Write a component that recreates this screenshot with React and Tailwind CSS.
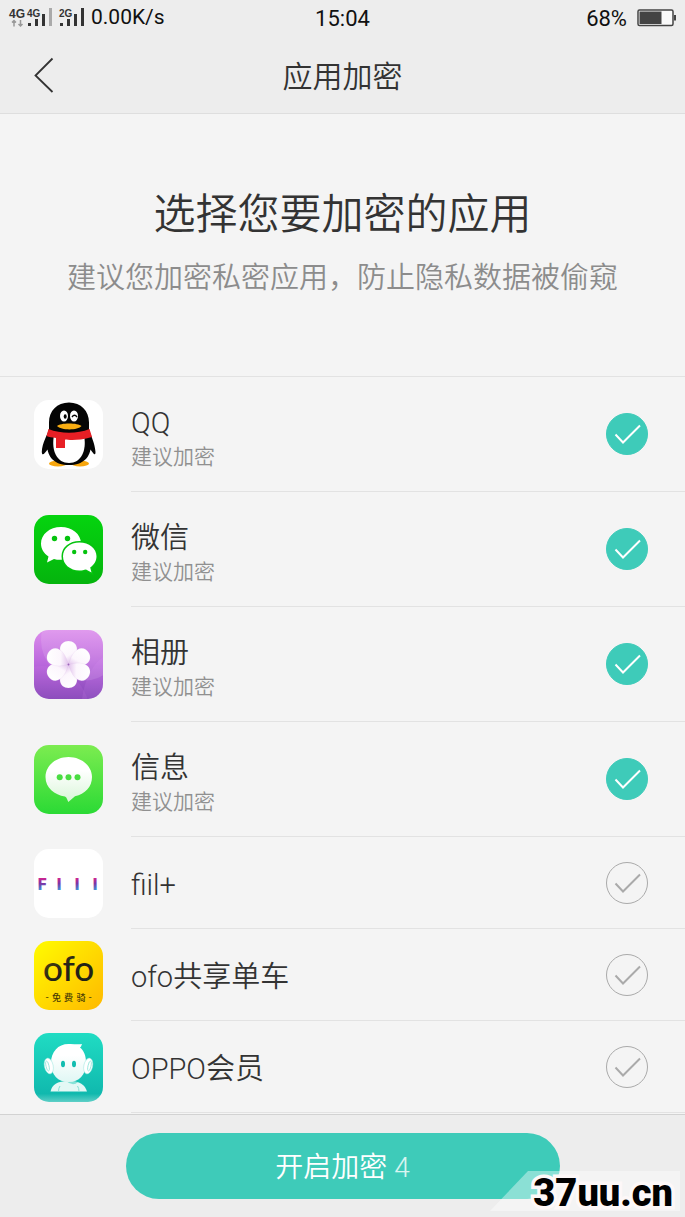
import React, { useState } from "react";

function QQIcon() {
  return (
    <svg viewBox="0 0 69 69" className="size-full" aria-hidden="true">
      <rect width="69" height="69" rx="15" fill="#fff" />
      <ellipse cx="24" cy="63.500" rx="9" ry="3" fill="#f7a60d" />
      <ellipse cx="46" cy="63.500" rx="9" ry="3" fill="#f7a60d" />
      <path d="M35 2.500C23 2.500 15 11 15 22.500V29C14 34 8 43 7.800 52C8 57 11 53 13.500 49.500C15 57 20 65 35 65C50 65 55 57 56.500 49.500C59 53 61.500 57 61.500 52C61 43 56 34 55 29V22.500C55 11 47 2.500 35 2.500Z" fill="#050505" />
      <path d="M20 35H50C53 51 47 63 35 63C23 63 17 51 20 35Z" fill="#fff" />
      <path d="M14.500 29C27 34 43 34 55.500 29L58 37C44 41 35 40 31 39.500V48H22V38C18 37.500 15 37 12.500 36Z" fill="#e71f25" />
      <ellipse cx="30" cy="16" rx="4" ry="5.500" fill="#fff" />
      <ellipse cx="40" cy="16" rx="4" ry="5.500" fill="#fff" />
      <ellipse cx="31.200" cy="16.500" rx="1.500" ry="2.200" fill="#050505" />
      <path d="M38 17Q40.500 13.500 43 17" fill="none" stroke="#050505" strokeWidth="1.400" />
      <path d="M23 26C26 22.500 44 22.500 47.500 26C44 30.500 27 30.500 23 26Z" fill="#f9ad12" />
    </svg>
  );
}

function WeChatIcon() {
  return (
    <svg viewBox="0 0 69 69" className="size-full" aria-hidden="true">
      <defs>
        <linearGradient id="wechat" x1="0" y1="0" x2="0" y2="1">
          <stop offset="0" stopColor="#05d40f" />
          <stop offset="1" stopColor="#05b40d" />
        </linearGradient>
      </defs>
      <rect width="69" height="69" rx="15" fill="url(#wechat)" />
      <path d="M27 12C15.500 12 7 19.500 7 28.500C7 34 10 38.500 14.500 41.500L13 47.500L20 44C30 47 47 42 47 28.500C47 19 38 12 27 12Z" fill="#fff" />
      <path d="M45.500 27.500C36 27.500 29 33.500 29 41.300C29 49.500 36 55.500 45.500 55.500C48 55.500 50 55 52 54.500L57.500 57.500L56.200 52.500C60 50 62.500 46 62.500 41.300C62.500 33.500 55 27.500 45.500 27.500Z" fill="#fff" stroke="#05c30e" strokeWidth="3" paintOrder="stroke" />
      <g fill="#05c30e">
        <circle cx="20.500" cy="23.500" r="2.700" />
        <circle cx="33.500" cy="23.500" r="2.700" />
        <circle cx="40.200" cy="37" r="2.200" />
        <circle cx="51.200" cy="37" r="2.200" />
      </g>
    </svg>
  );
}

function AlbumIcon() {
  const angles = [0, 180, 60, 240, 120, 300];
  return (
    <svg viewBox="0 0 69 69" className="size-full" aria-hidden="true">
      <defs>
        <linearGradient id="album" x1="0" y1="0" x2="0" y2="1">
          <stop offset="0" stopColor="#dc8cec" />
          <stop offset="0.500" stopColor="#b966dc" />
          <stop offset="1" stopColor="#8246b6" />
        </linearGradient>
        <linearGradient id="petal" x1="0.300" y1="0" x2="0.700" y2="1">
          <stop offset="0" stopColor="#ffffff" />
          <stop offset="0.600" stopColor="#fcf6fd" />
          <stop offset="1" stopColor="#dcb8e8" />
        </linearGradient>
        <clipPath id="albumClip"><rect width="69" height="69" rx="15" /></clipPath>
      </defs>
      <g clipPath="url(#albumClip)">
        <rect width="69" height="69" fill="url(#album)" />
        <circle cx="48" cy="10" r="41" fill="#fff" opacity="0.120" />
        <circle cx="8" cy="84" r="48" fill="#e080f0" opacity="0.120" />
        <path d="M48 69Q52 40 69 27V69Z" fill="#e8a0ff" opacity="0.120" />
      </g>
      {angles.map((a) => (
        <path key={a} transform={`rotate(${a} 34.500 34.500)`} d="M34.500 34.500C30.500 30 26 25 26 19C26 14 30 11 34.500 11C39 11 43 14 43 19C43 25 38.500 30 34.500 34.500Z" fill="url(#petal)" stroke="#c79ad8" strokeOpacity="0.250" strokeWidth="0.400" />
      ))}
      <circle cx="34.500" cy="34.500" r="0.900" fill="#9a62b8" />
    </svg>
  );
}

function MessageIcon() {
  return (
    <svg viewBox="0 0 69 69" className="size-full" aria-hidden="true">
      <defs>
        <linearGradient id="message" x1="0" y1="0" x2="0" y2="1">
          <stop offset="0" stopColor="#7cec50" />
          <stop offset="1" stopColor="#2bda35" />
        </linearGradient>
        <linearGradient id="bubble" x1="0" y1="0" x2="0" y2="1">
          <stop offset="0.300" stopColor="#ffffff" />
          <stop offset="1" stopColor="#d9f6d8" />
        </linearGradient>
      </defs>
      <rect width="69" height="69" rx="15" fill="url(#message)" />
      <path d="M34.500 12C21.500 12 11.500 21 11.500 32C11.500 43 20.500 50 31 51.500Q32.500 52 33 54L34.300 57L41 51.200C51 49 58 42 58 32C58 21 47.500 12 34.500 12Z" fill="url(#bubble)" />
      <g fill="#49dd41">
        <circle cx="25.700" cy="32.300" r="3" />
        <circle cx="34.500" cy="32.300" r="3" />
        <circle cx="43.500" cy="32.300" r="3" />
      </g>
    </svg>
  );
}

function FiilIcon() {
  return (
    <svg viewBox="0 0 69 69" className="size-full" aria-hidden="true">
      <defs>
        <linearGradient id="fiil" x1="0" y1="28" x2="0" y2="41" gradientUnits="userSpaceOnUse">
          <stop offset="0" stopColor="#e0208a" />
          <stop offset="0.500" stopColor="#7c35a6" />
          <stop offset="1" stopColor="#3f8fd4" />
        </linearGradient>
      </defs>
      <rect width="69" height="69" rx="15" fill="#fff" />
      <g fill="url(#fiil)" fontFamily="Roboto, sans-serif" fontWeight="900" fontSize="17" textAnchor="middle">
        <text x="8" y="40.500" fontSize="16">F</text>
        <text x="25" y="40.500">I</text>
        <text x="43" y="40.500">I</text>
        <text x="61" y="40.500">I</text>
      </g>
    </svg>
  );
}

function OfoIcon() {
  return (
    <svg viewBox="0 0 69 69" className="size-full" aria-hidden="true">
      <defs>
        <linearGradient id="ofo" x1="0" y1="0" x2="1" y2="1">
          <stop offset="0.100" stopColor="#fff500" />
          <stop offset="1" stopColor="#ffb900" />
        </linearGradient>
        <linearGradient id="ofoText" x1="0" y1="0" x2="1" y2="1">
          <stop offset="0" stopColor="#6b5b05" />
          <stop offset="0.500" stopColor="#222118" />
          <stop offset="1" stopColor="#222118" />
        </linearGradient>
      </defs>
      <rect width="69" height="69" rx="15" fill="url(#ofo)" />
      <text x="34.500" y="40" textAnchor="middle" fontFamily="Lato, sans-serif" fontWeight="500" fontSize="35" fill="url(#ofoText)">ofo</text>
      <g fill="#4b3d05" fontFamily="'Noto Sans CJK SC', sans-serif" fontSize="9" fontWeight="500" textAnchor="middle">
        <text x="13" y="59">-</text>
        <text x="22.500" y="59.500">免</text>
        <text x="34.500" y="59.500">费</text>
        <text x="47" y="59.500">骑</text>
        <text x="56" y="59">-</text>
      </g>
    </svg>
  );
}

function OppoIcon() {
  return (
    <svg viewBox="0 0 69 69" className="size-full" aria-hidden="true">
      <defs>
        <linearGradient id="oppo" x1="0" y1="0" x2="0" y2="1">
          <stop offset="0" stopColor="#20dcc3" />
          <stop offset="0.880" stopColor="#10b9ae" />
          <stop offset="1" stopColor="#5fcfc7" />
        </linearGradient>
        <linearGradient id="robot" x1="0" y1="0" x2="0" y2="1">
          <stop offset="0.300" stopColor="#ffffff" />
          <stop offset="1" stopColor="#e0f7f4" />
        </linearGradient>
      </defs>
      <rect width="69" height="69" rx="15" fill="url(#oppo)" />
      <path d="M16.500 58.500C18 52 23 48 34.500 48C46 48 51 52 53 58.500Z" fill="#e3f8f5" />
      <path d="M32 48Q39 54 44 49Z" fill="#86e2d7" />
      <path d="M24.500 58.500Q24.500 55 26 53M45 58.500Q45 55 43.500 53" stroke="#7edbd1" strokeWidth="0.900" fill="none" />
      <path d="M34.500 11C39 10.500 43 12 48 11C47 13 47.500 13.500 46 14.500C50 17.500 52 23 52 30C52 42 45 49 34.500 49C24 49 17 42 17 30C17 19 24 11 34.500 11Z" fill="url(#robot)" />
      <ellipse cx="14.800" cy="33" rx="4.400" ry="8" transform="rotate(-12 14.800 33)" fill="#fff" stroke="#9ce6df" strokeWidth="0.500" />
      <ellipse cx="54.200" cy="33" rx="4.400" ry="8" transform="rotate(12 54.200 33)" fill="#fff" stroke="#9ce6df" strokeWidth="0.500" />
      <ellipse cx="13.500" cy="33" rx="1.500" ry="5" transform="rotate(-12 13.500 33)" fill="none" stroke="#8fe3da" strokeWidth="0.800" />
      <ellipse cx="55.500" cy="33" rx="1.500" ry="5" transform="rotate(12 55.500 33)" fill="none" stroke="#8fe3da" strokeWidth="0.800" />
      <ellipse cx="29" cy="31" rx="2" ry="3.200" fill="#12bdb0" />
      <ellipse cx="40" cy="31" rx="2" ry="3.200" fill="#12bdb0" />
    </svg>
  );
}

const apps = [
  { id: "qq", name: "QQ", suggested: true, Icon: QQIcon },
  { id: "wechat", name: "微信", suggested: true, Icon: WeChatIcon },
  { id: "album", name: "相册", suggested: true, Icon: AlbumIcon },
  { id: "message", name: "信息", suggested: true, Icon: MessageIcon },
  { id: "fiil", name: "fiil+", suggested: false, Icon: FiilIcon },
  { id: "ofo", name: "ofo共享单车", suggested: false, Icon: OfoIcon },
  { id: "oppo", name: "OPPO会员", suggested: false, Icon: OppoIcon },
];

function StatusBar() {
  return (
    <div className="grid h-9 grid-cols-3 items-center px-[9px] text-[22px] font-normal text-[#111]">
      <div className="flex items-center gap-[6px]">
        <svg viewBox="0 -3 76 24" className="h-6 w-[76px] overflow-visible" role="img" aria-label="4G 2G">
          <g fill="#333" fontFamily="'Liberation Sans', sans-serif" fontWeight="700">
            <text x="0" y="9" fontSize="12">4G</text>
            <text x="18" y="7.500" fontSize="10">4G</text>
            <text x="50" y="7.500" fontSize="10">2G</text>
          </g>
          <path d="M5 17.500V12M3 13.500L5 11.500L7 13.500M11.500 11V16.500M9.500 15L11.500 17L13.500 15" stroke="#999" strokeWidth="1.500" fill="none" />
          <g fill="#333">
            <rect x="19" y="14" width="3" height="3" />
            <rect x="26" y="10" width="3" height="7" />
            <rect x="33" y="5" width="3" height="12" />
            <rect x="40" y="-1" width="3" height="18" fill="#aaa" />
            <rect x="51" y="14" width="3" height="3" />
            <rect x="58" y="10" width="3" height="7" />
            <rect x="65" y="5" width="3" height="12" />
            <rect x="72" y="-1" width="3" height="18" />
          </g>
        </svg>
        <span className="text-[21px]">0.00K/s</span>
      </div>
      <time className="text-center">15:04</time>
      <div className="flex items-center justify-end gap-[10px]">
        <span>68%</span>
        <svg viewBox="0 0 39 18" className="h-[18px] w-[39px]" aria-hidden="true">
          <rect x="1" y="1" width="35" height="15.500" rx="1.500" fill="#fafafa" stroke="#444" strokeWidth="1.500" />
          <rect x="2.500" y="2.500" width="22" height="12.500" fill="#444" />
          <rect x="37" y="6" width="2" height="5.500" fill="#444" />
        </svg>
      </div>
    </div>
  );
}

function AppRow({ app, checked, onToggle }) {
  const { Icon } = app;
  return (
    <li>
      <label htmlFor={app.id} className="flex cursor-pointer items-stretch gap-7 pl-[34px]">
        <span className="size-[69px] shrink-0 self-center">
          <Icon />
        </span>
        <span className={`flex min-w-0 flex-1 items-center justify-between border-b border-[#e2e2e2] pr-[37px] ${app.suggested ? "h-[115px]" : "h-[92px]"}`}>
          <span className={`flex flex-col ${app.suggested ? "pt-[7px]" : "pt-1"}`}>
            <span className="text-[29px] leading-[38px] text-[#333]">{app.name}</span>
            {app.suggested && <span className="text-[21px] leading-[30px] text-[#909090]">建议加密</span>}
          </span>
          <span className="grid size-[42px] shrink-0 place-items-center">
            <input
              id={app.id}
              type="checkbox"
              checked={checked}
              onChange={onToggle}
              className="col-start-1 row-start-1 size-[42px] cursor-pointer appearance-none rounded-full border border-[#aaa] checked:border-[#3ecbb9] checked:bg-[#3ecbb9]"
            />
            <svg viewBox="0 0 42 42" className={`pointer-events-none col-start-1 row-start-1 size-[42px] ${checked ? "text-white" : "text-[#aaa]"}`} aria-hidden="true">
              <path d="M9.500 21.500L17 29.500L34 12.500" fill="none" stroke="currentColor" strokeWidth="2" />
            </svg>
          </span>
        </span>
      </label>
    </li>
  );
}

export default function App() {
  const [selected, setSelected] = useState(["qq", "wechat", "album", "message"]);
  const toggle = (id) =>
    setSelected((cur) => (cur.includes(id) ? cur.filter((x) => x !== id) : [...cur, id]));

  return (
    <div className="flex min-h-screen flex-col bg-[#f4f4f4] font-[Roboto,'Noto_Sans_CJK_SC',sans-serif] font-[350]">
      <header className="border-b border-[#dedede] bg-[#ededed]">
        <StatusBar />
        <div className="grid h-[77px] grid-cols-[90px_1fr_90px] items-center">
          <button type="button" aria-label="返回" className="flex h-full items-center pl-[34px]">
            <svg viewBox="0 0 20 36" className="h-9 w-5" aria-hidden="true">
              <path d="M18.500 1.500L1.500 18.500L18.500 35" fill="none" stroke="#333" strokeWidth="1.800" />
            </svg>
          </button>
          <h1 className="pt-1 text-center text-[30px] leading-10 text-[#333]">应用加密</h1>
        </div>
      </header>

      <main className="flex-1">
        <section className="border-b border-[#e2e2e2] pt-[70px] pb-[78px] text-center">
          <h2 className="text-[42px] leading-[62px] text-[#333]">选择您要加密的应用</h2>
          <p className="pt-3 text-[29px] leading-10 text-[#8c8c8c]">建议您加密私密应用，防止隐私数据被偷窥</p>
        </section>
        <ul>
          {apps.map((app) => (
            <AppRow key={app.id} app={app} checked={selected.includes(app.id)} onToggle={() => toggle(app.id)} />
          ))}
        </ul>
      </main>

      <footer className="relative flex justify-center border-t border-[#d2d2d2] bg-[#ededed] py-[18px]">
        <button type="button" className="h-[66px] w-[434px] rounded-full bg-[#3ecbb9] pt-1 text-[28px] text-white">
          开启加密 <span className="text-white/80">{selected.length}</span>
        </button>
        <div className="absolute right-[5px] bottom-[6px] h-10 w-[190px] bg-white/40 [clip-path:polygon(0_100%,20%_0,100%_0,100%_100%)]" />
        <span className="absolute right-3 bottom-1 font-[Roboto,sans-serif] text-[38px] leading-10 font-black text-black [-webkit-text-stroke:7px_#fdf8f8] [paint-order:stroke_fill]">
          37uu.cn
        </span>
      </footer>
    </div>
  );
}
